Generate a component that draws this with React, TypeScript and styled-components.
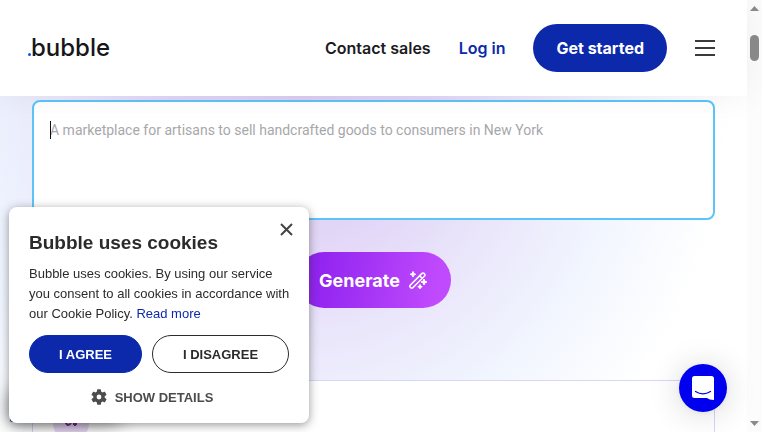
import React from "react";
import styled, { createGlobalStyle } from "styled-components";

const GlobalStyle = createGlobalStyle`
  *, *::before, *::after { box-sizing: border-box; }
  html, body { margin: 0; height: 100%; overflow: hidden; }
  body { background: #fff; font-family: "Inter", "Liberation Sans", sans-serif; color: #1b1b1f; }
  button, textarea { font: inherit; margin: 0; }
  button { cursor: pointer; border: 0; padding: 0; background: none; color: inherit; }
  a { text-decoration: none; color: inherit; }
`;

const Shell = styled.div`
  display: flex;
  height: 100vh;
  overflow: hidden;
`;

const Page = styled.div`
  flex: 1;
  min-width: 0;
  display: flex;
  flex-direction: column;
`;

const Header = styled.header`
  flex: none;
  position: relative;
  z-index: 1;
  display: flex;
  align-items: center;
  justify-content: space-between;
  padding: 24px 32px 24px 28px;
  background: #fff;
  box-shadow: 0 0 32px rgba(0, 0, 0, 0.06);
`;

const Logo = styled.a`
  display: flex;
  align-items: baseline;
  font: 500 24px/32px "Inter", sans-serif;
  color: #16161a;
`;

const LogoDot = styled.span`
  width: 3px;
  height: 3px;
  border-radius: 50%;
  background: #1450f0;
`;

const Nav = styled.nav`
  display: flex;
  align-items: center;
  gap: 28px;
  font: 600 16px/24px "Inter", sans-serif;
`;

const NavLink = styled.a<{ $accent?: boolean }>`
  color: ${(p) => (p.$accent ? "#0c29ab" : "#1b1b1f")};
`;

const StartButton = styled.button`
  height: 48px;
  padding: 0 23px;
  border-radius: 24px;
  background: #0c29ab;
  color: #fff;
  font-weight: 700;
`;

const MenuButton = styled.button`
  display: flex;
  flex-direction: column;
  gap: 5px;
  width: 20px;
`;

const MenuLine = styled.span`
  height: 2px;
  background: #3a3a3d;
`;

const Hero = styled.main`
  flex: 1;
  min-height: 0;
  padding: 4px 32px 0;
  background:
    radial-gradient(ellipse 430px 460px at 300px 0, #ddcdf2 0%, #e2d6f7 30%, rgba(232, 227, 250, 0.95) 50%, rgba(238, 243, 254, 0.85) 74%, rgba(255, 255, 255, 0) 100%),
    radial-gradient(ellipse 300px 330px at 0 0, #e2eefb 0%, #f0f5ff 45%, #ffffff 100%);
`;

const PromptField = styled.div`
  position: relative;
  height: 120px;
`;

const Prompt = styled.textarea`
  display: block;
  width: 100%;
  height: 100%;
  padding: 18px 16px;
  border: 2px solid #5bc4fb;
  border-radius: 8px;
  outline: 0;
  resize: none;
  background: #fff;
  font-family: "Roboto", sans-serif;
  font-size: 14px;
  line-height: 20px;
  caret-color: transparent;
  &::placeholder { color: #a7a7aa; opacity: 1; }
`;

const Caret = styled.span`
  position: absolute;
  left: 18px;
  top: 21px;
  width: 1px;
  height: 18px;
  background: #111;
`;

const Actions = styled.div`
  display: flex;
  justify-content: center;
  padding: 32px 0 72px;
`;

const GenerateButton = styled.button`
  display: flex;
  align-items: center;
  gap: 8px;
  height: 56px;
  padding: 0 23px;
  border-radius: 28px;
  background: linear-gradient(100deg, #8b1fee 5%, #c04afd 90%);
  color: #fff;
  font-size: 18px;
  font-weight: 700;
`;

const Card = styled.section`
  height: 240px;
  padding: 24px 20px;
  border: 1px solid #d5d6f8;
  background: #fff;
`;

const CardIcon = styled.div`
  display: flex;
  align-items: center;
  justify-content: center;
  width: 36px;
  height: 36px;
  border-radius: 50%;
  background: #ead9f8;
  color: #7a1690;
`;

const ScrollTrack = styled.div`
  flex: none;
  width: 15px;
  display: flex;
  flex-direction: column;
  align-items: center;
  padding: 6px 0;
  background: #fcfcfc;
`;

const ScrollThumb = styled.span`
  width: 9px;
  height: 26px;
  margin: 24px 0 auto;
  border-radius: 5px;
  background: #8b8b8b;
`;

const CornerShade = styled.div`
  position: fixed;
  left: 10px;
  bottom: 10px;
  width: 110px;
  height: 30px;
  border-radius: 2px;
  background: #0c29ab;
  box-shadow: 0 0 20px rgba(0, 0, 0, 0.5);
`;

const CookieDialog = styled.section`
  position: fixed;
  z-index: 2;
  left: 9px;
  bottom: 9px;
  width: 300px;
  padding: 24px 20px 18px;
  border-radius: 8px;
  background: #fff;
  box-shadow: 0 2px 10px rgba(50, 50, 50, 0.5);
  font-family: "Liberation Sans", sans-serif;
  color: #2b2b2b;
`;

const CookieTitle = styled.h2`
  margin: 0 0 9px;
  font-size: 19px;
  line-height: 24px;
  font-weight: 700;
`;

const CookieText = styled.p`
  margin: 0 0 11px;
  font-size: 13px;
  line-height: 20px;
  white-space: nowrap;
`;

const PolicyLink = styled.a`
  color: #0c29ab;
`;

const CloseButton = styled.button`
  position: absolute;
  right: 16px;
  top: 16px;
  width: 13px;
  height: 13px;
  display: flex;
`;

const Choices = styled.div`
  display: flex;
  gap: 10px;
`;

const ChoiceButton = styled.button<{ $primary?: boolean }>`
  flex: ${(p) => (p.$primary ? "0 0 113px" : "1")};
  height: 38px;
  border-radius: 19px;
  border: 1px solid ${(p) => (p.$primary ? "#0c29ab" : "#2b2b2b")};
  background: ${(p) => (p.$primary ? "#0c29ab" : "#fff")};
  color: ${(p) => (p.$primary ? "#fff" : "#2b2b2b")};
  font-size: 13px;
  font-weight: 700;
`;

const DetailsButton = styled.button`
  display: flex;
  align-items: center;
  gap: 8px;
  margin: 16px auto 0;
  padding-right: 14px;
  height: 16px;
  font-size: 13px;
  font-weight: 700;
  color: #4c4c4c;
`;

const ChatButton = styled.button`
  position: fixed;
  z-index: 2;
  right: 35px;
  bottom: 20px;
  display: flex;
  align-items: center;
  justify-content: center;
  width: 48px;
  height: 48px;
  border-radius: 50%;
  background: #0000ee;
  box-shadow: 0 1px 6px rgba(0, 0, 0, 0.06), 0 2px 32px rgba(0, 0, 0, 0.16);
`;

const WandIcon = () => (
  <svg width="20" height="20" viewBox="0 0 20 20" fill="none" stroke="#fff" strokeWidth="1.6" strokeLinejoin="round">
    <path d="M2.200 15.200 14 3.400a1.400 1.400 0 0 1 2 0l.6.6a1.400 1.400 0 0 1 0 2L4.800 17.800a1.400 1.400 0 0 1-2 0l-.6-.6a1.400 1.400 0 0 1 0-2ZM11.600 5.800l2.600 2.600" />
    <path fill="#fff" strokeWidth="1" d="m5 1.500.8 2 2 .8-2 .8-.8 2-.8-2-2-.8 2-.8ZM16 9l.9 2.100 2.100.9-2.100.9L16 15l-.9-2.100L13 12l2.100-.9ZM12 14.500l.7 1.500 1.500.7-1.500.7-.7 1.500-.7-1.500-1.500-.7 1.500-.7Z" />
  </svg>
);

const GearIcon = () => (
  <svg width="16" height="16" viewBox="2 2 20 20" fill="#4c4c4c">
    <path d="M19.140 12.940a7.500 7.500 0 0 0 0-1.880l2.030-1.580a.5.5 0 0 0 .12-.61l-1.920-3.320a.5.5 0 0 0-.59-.22l-2.390.96a7 7 0 0 0-1.620-.94l-.36-2.540a.5.5 0 0 0-.48-.41h-3.840a.5.5 0 0 0-.47.41l-.36 2.540a7.300 7.300 0 0 0-1.620.94l-2.390-.96a.5.5 0 0 0-.59.22L2.740 8.870a.5.5 0 0 0 .12.610l2.030 1.580a7.500 7.500 0 0 0 0 1.880l-2.030 1.580a.5.5 0 0 0-.12.610l1.920 3.320c.12.220.37.290.59.220l2.390-.96c.5.380 1.030.7 1.620.94l.36 2.540c.5.240.24.410.48.410h3.840c.24 0 .44-.17.470-.41l.36-2.540c.59-.24 1.130-.56 1.620-.94l2.390.96c.22.080.47 0 .59-.22l1.920-3.320a.5.5 0 0 0-.12-.61ZM12 15a3 3 0 1 1 0-6 3 3 0 0 1 0 6Z" />
  </svg>
);

const ChatIcon = () => (
  <svg width="22" height="24" viewBox="0 0 22 24">
    <path fill="#fff" d="M2.500 0h17A2.500 2.500 0 0 1 22 2.500V24c-3 0-5.500-1-7-2H2.500A2.500 2.500 0 0 1 0 19.500v-17A2.500 2.500 0 0 1 2.500 0Z" />
    <path fill="none" stroke="#00e" strokeWidth="1.300" strokeLinecap="round" d="M3.500 15.500q7.500 4.600 15 0" />
  </svg>
);

const Arrow = ({ down }: { down?: boolean }) => (
  <svg width="9" height="5" viewBox="0 0 9 5" fill="#8b8b8b">
    <path d={down ? "M0 0h9L4.500 5Z" : "M0 5h9L4.500 0Z"} />
  </svg>
);

export default function App() {
  return (
    <Shell>
      <GlobalStyle />
      <Page>
        <Header>
          <Logo href="#"><LogoDot />bubble</Logo>
          <Nav>
            <NavLink href="#">Contact sales</NavLink>
            <NavLink href="#" $accent>Log in</NavLink>
            <StartButton>Get started</StartButton>
            <MenuButton aria-label="Menu"><MenuLine /><MenuLine /><MenuLine /></MenuButton>
          </Nav>
        </Header>
        <Hero>
          <PromptField>
            <Prompt aria-label="App idea" placeholder="A marketplace for artisans to sell handcrafted goods to consumers in New York" />
            <Caret />
          </PromptField>
          <Actions>
            <GenerateButton>Generate <WandIcon /></GenerateButton>
          </Actions>
          <Card>
            <CardIcon>
              <svg width="16" height="16" viewBox="0 0 16 16" fill="none" stroke="currentColor" strokeWidth="2">
                <path d="M3 5v3q2 4 5 0M12 5v6M10 9h4" />
              </svg>
            </CardIcon>
          </Card>
        </Hero>
      </Page>
      <ScrollTrack aria-hidden="true">
        <Arrow /><ScrollThumb /><Arrow down />
      </ScrollTrack>
      <CornerShade />
      <CookieDialog role="dialog" aria-labelledby="cookie-title">
        <CloseButton aria-label="Close">
          <svg width="13" height="13" viewBox="0 0 13 13" stroke="#444" strokeWidth="2"><path d="m1 1 11 11M12 1 1 12" /></svg>
        </CloseButton>
        <CookieTitle id="cookie-title">Bubble uses cookies</CookieTitle>
        <CookieText>
          Bubble uses cookies. By using our service<br />
          you consent to all cookies in accordance with<br />
          our Cookie Policy. <PolicyLink href="#">Read more</PolicyLink>
        </CookieText>
        <Choices>
          <ChoiceButton $primary>I AGREE</ChoiceButton>
          <ChoiceButton>I DISAGREE</ChoiceButton>
        </Choices>
        <DetailsButton><GearIcon />SHOW DETAILS</DetailsButton>
      </CookieDialog>
      <ChatButton aria-label="Open chat"><ChatIcon /></ChatButton>
    </Shell>
  );
}
